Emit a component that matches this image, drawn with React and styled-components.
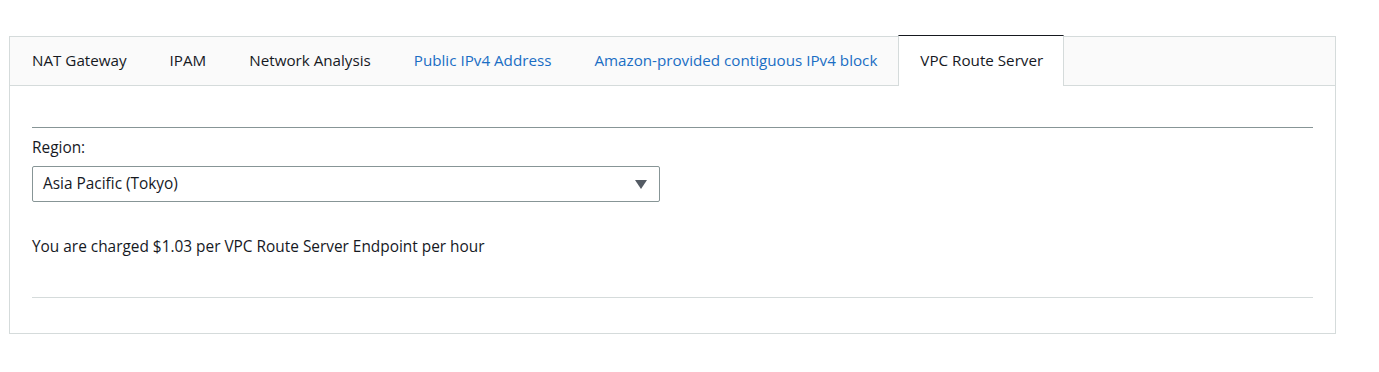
import React, { useState } from 'react';
import styled, { createGlobalStyle } from 'styled-components';

const GlobalStyle = createGlobalStyle`
    body {
        margin: 0;
        background: #ffffff;
        font-family: "Open Sans", "Noto Sans", sans-serif;
        color: #16191f;
    }
`;

const Page = styled.div`
    padding: 36px 43px 0 9px;
`;

const Panel = styled.div`
    border: 1px solid #d5dbdb;
    background: #ffffff;
`;

const TabBar = styled.div`
    display: flex;
    background: #fafafa;
    border-bottom: 1px solid #d5dbdb;
    height: 48px;
`;

const Tab = styled.div`
    display: flex;
    align-items: center;
    padding: 0 20px 2px 21px;
    box-sizing: border-box;
    font-size: 15.2px;
    cursor: pointer;
    color: ${(p) => (p.$link ? '#1a6ec4' : '#16191f')};
    background: ${(p) => (p.$active ? '#ffffff' : 'transparent')};
    border-left: 1px solid ${(p) => (p.$active ? '#d5dbdb' : 'transparent')};
    border-right: 1px solid ${(p) => (p.$active ? '#d5dbdb' : 'transparent')};
    ${(p) =>
        p.$active &&
        `
        margin-top: -2px;
        height: 51px;
        padding-bottom: 2px;
        border-top: 1px solid #16191f;
    `}
`;

const Body = styled.div`
    padding: 41px 22px 35px 22px;
`;

const Rule = styled.hr`
    border: 0;
    margin: 0;
    border-top: 1px solid ${(p) => (p.$light ? '#d5dbdb' : '#879596')};
`;

const Label = styled.label`
    display: block;
    margin-top: 10px;
    font-size: 15.4px;
    line-height: 20px;
`;

const SelectBox = styled.div`
    position: relative;
    margin-top: 8px;
    width: 628px;
    height: 36px;
    box-sizing: border-box;
    border: 1px solid #879596;
    border-radius: 2px;
    display: flex;
    align-items: center;
    padding: 0 10px 1px;
    font-size: 15.4px;
`;

const Caret = styled.span`
    position: absolute;
    right: 12px;
    top: 13px;
    width: 0;
    height: 0;
    border-left: 6px solid transparent;
    border-right: 6px solid transparent;
    border-top: 9px solid #545b64;
`;

const Note = styled.p`
    margin: 35px 0 40px;
    font-size: 15.4px;
    line-height: 20px;
`;

const tabs = [
    { name: 'NAT Gateway' },
    { name: 'IPAM' },
    { name: 'Network Analysis' },
    { name: 'Public IPv4 Address', link: true },
    { name: 'Amazon-provided contiguous IPv4 block', link: true },
    { name: 'VPC Route Server' },
];

const App = () => {
    const [active, setActive] = useState('VPC Route Server');

    return (
        <Page>
            <GlobalStyle />
            <Panel>
                <TabBar>
                    {tabs.map((t) => (
                        <Tab
                            key={t.name}
                            $link={t.link}
                            $active={active === t.name}
                            onClick={() => setActive(t.name)}
                        >
                            {t.name}
                        </Tab>
                    ))}
                </TabBar>
                <Body>
                    <Rule />
                    <Label>Region:</Label>
                    <SelectBox>
                        Asia Pacific (Tokyo)
                        <Caret />
                    </SelectBox>
                    <Note>You are charged $1.03 per VPC Route Server Endpoint per hour</Note>
                    <Rule $light />
                </Body>
            </Panel>
        </Page>
    );
};

export default App;
